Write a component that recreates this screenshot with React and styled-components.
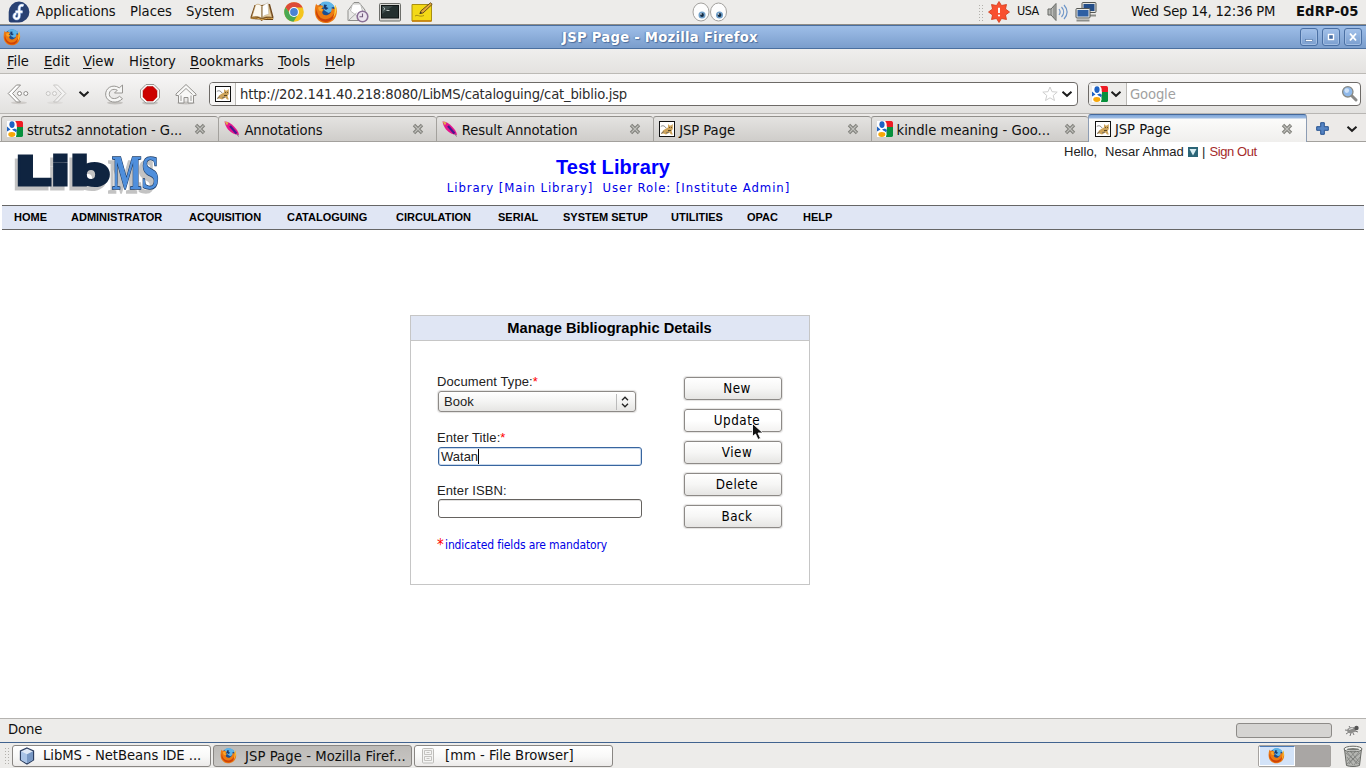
import React from 'react';
import styled, { createGlobalStyle } from 'styled-components';

const Global = createGlobalStyle`
  * { box-sizing: border-box; }
  html, body { margin: 0; padding: 0; }
  body { width: 1366px; height: 768px; overflow: hidden; background: #fff; }
  svg { display: block; flex: none; }
`;

const UI = "'DejaVu Sans Condensed', 'DejaVu Sans', sans-serif";
const ARIAL = "'Liberation Sans', Arial, sans-serif";

const Desktop = styled.div`
  position: relative;
  display: flex;
  flex-direction: column;
  width: 1366px;
  height: 768px;
  overflow: hidden;
  font-family: ${UI};
  font-size: 14.67px;
  color: #101010;
  white-space: pre;
`;

const Slot = styled.div`
  flex: none;
  display: flex;
  align-items: center;
  width: ${p => p.$w}px;
  height: 100%;
`;

const Label = styled.span`
  flex: none;
  display: block;
  font-size: ${p => p.$size || 14.67}px;
  font-weight: ${p => (p.$bold ? 700 : 400)};
  letter-spacing: ${p => p.$ls || 0}px;
  padding-bottom: ${p => p.$pb || 0}px;
  u { text-decoration-thickness: 1px; text-underline-offset: 2px; }
`;

const TopPanel = styled.div`
  flex: none;
  display: flex;
  height: 25px;
  padding-left: 8px;
  background: #edecea;
  border-bottom: 1px solid #8f8d87;
  line-height: 20px;
`;

const Grip = styled.div`
  flex: none;
  width: 6px;
  height: 17px;
  background-image: radial-gradient(circle, #b2b0ab 0.8px, transparent 1px);
  background-size: 3px 3px;
`;

const TitleBar = styled.div`
  flex: none;
  display: flex;
  align-items: center;
  height: 24px;
  padding: 0 4px 0 3px;
  background: linear-gradient(#4a6f9f 0, #4a6f9f 1px, #9dbde6 1px, #96b7e2 6px, #7c9fcd 22px, #7c9fcd 23px, #4a6f9f 23px);
`;

const Title = styled.div`
  flex: 1;
  padding-right: 1px;
  text-align: center;
  color: #fff;
  font-size: 14.67px;
  font-weight: 700;
  line-height: 22px;
  letter-spacing: 0.26px;
  text-shadow: 1px 1px 1px #4c6d9b, -1px 0 1px #6485b4;
`;

const WindowButtons = styled.div`
  display: flex;
  gap: 4px;
`;

const WindowButton = styled.div`
  width: 18px;
  height: 18px;
  border: 1px solid #4a70a4;
  border-radius: 3px;
  background: linear-gradient(#a2c1ea, #7b9fcf);
  box-shadow: inset 0 0 0 1px #a2bee3;
`;

const MenuBar = styled.div`
  flex: none;
  display: flex;
  height: 25px;
  padding-left: 7px;
  background: linear-gradient(#efeeed, #e4e2e0);
  border-bottom: 1px solid #bcbab6;
`;

const Toolbar = styled.div`
  flex: none;
  display: flex;
  align-items: center;
  height: 40px;
  padding: 0 6px 0 7px;
  background: linear-gradient(#f7f6f6, #e2e1df);
  border-bottom: 1px solid #b8b6b3;
`;

const Entry = styled.div`
  flex: none;
  display: flex;
  align-items: center;
  width: ${p => p.$w}px;
  height: 24px;
  margin-left: ${p => p.$ml || 0}px;
  border: 1px solid #6d6a67;
  border-radius: 4px;
  background: #fff;
  overflow: hidden;
`;

const EntryHead = styled.div`
  flex: none;
  display: flex;
  align-items: center;
  gap: 2px;
  height: 22px;
  width: ${p => p.$w}px;
  padding-left: ${p => p.$pad}px;
  background: ${p => p.$bg};
  border-right: 1px solid #bbb9b5;
`;

const EntryText = styled.div`
  flex: 1;
  padding-left: ${p => p.$pl}px;
  color: ${p => p.$color};
  letter-spacing: ${p => p.$ls || 0}px;
`;

const TabStrip = styled.div`
  flex: none;
  display: flex;
  align-items: flex-end;
  height: 28px;
  padding-left: 1px;
  background: #eceae8;
  box-shadow: inset 0 -1px 0 #a3a19d;
`;

const TabBox = styled.div`
  flex: none;
  display: flex;
  align-items: center;
  width: ${p => (p.$active ? 219 : 217.4)}px;
  height: ${p => (p.$active ? 28 : 26)}px;
  padding: 0 ${p => (p.$active ? 13 : 12)}px 0 ${p => (p.$active ? 6 : 5)}px;
  border: 1px solid ${p => (p.$active ? '#8c9cb3' : '#a3a19d')};
  border-right-width: ${p => (p.$active ? 1 : 0)}px;
  border-bottom-width: ${p => (p.$active ? 0 : 1)}px;
  border-top-color: ${p => (p.$active ? '#44689a' : '#92908c')};
  border-radius: 3px 3px 0 0;
  background: ${p =>
    p.$active
      ? 'linear-gradient(#7ea6d9 0, #9dbbe2 3px, #fbfbfa 4px, #f0efed 100%)'
      : 'linear-gradient(#e4e3e1, #cfcdca)'};
`;

const TabLabel = styled.div`
  flex: 1;
  padding-left: 4px;
  letter-spacing: ${p => p.$ls || 0}px;
`;

const TabTools = styled.div`
  display: flex;
  align-items: center;
  gap: 17px;
  height: 27px;
  padding-left: 9px;
`;

const Page = styled.div`
  flex: none;
  display: flex;
  flex-direction: column;
  height: 576px;
  background: #fff;
  font-family: ${ARIAL};
`;

const Header = styled.div`
  flex: none;
  display: grid;
  grid-template-columns: 410px 417px 1fr;
  height: 63px;
`;

const LogoCell = styled.div`
  padding: 1px 0 0 10px;
`;

const LogoText = styled.text`
  paint-order: stroke;
  filter: drop-shadow(${p => p.$shadow} 0 #c3c3c3);
`;

const LibraryInfo = styled.div`
  padding: 13px 0 0;
  text-align: center;
  color: #0000e6;
`;

const LibraryName = styled.div`
  padding-right: 11px;
  font-size: 20px;
  font-weight: 700;
  line-height: 24px;
  letter-spacing: 0.08px;
  color: #0000ff;
`;

const LibraryRole = styled.div`
  font-family: ${UI};
  font-size: 13px;
  line-height: 18px;
  letter-spacing: 0.92px;
`;

const UserLine = styled.div`
  display: flex;
  height: 20px;
  padding-left: 237px;
  font-size: 13px;
  line-height: 20px;
  color: #222;
`;

const SignOut = styled.span`
  padding-left: 4px;
  letter-spacing: -0.4px;
  color: #a52a2a;
`;

const Nav = styled.div`
  flex: none;
  display: flex;
  height: 25px;
  margin: 0 2px;
  padding-left: 12px;
  background: #e0e6f4;
  border: solid #666;
  border-width: 1px 0;
  font-size: 11px;
  font-weight: 700;
  line-height: 23px;
  color: #000;
`;

const NavItem = styled.div`
  flex: none;
  width: ${p => p.$w}px;
`;

const Panel = styled.div`
  flex: none;
  width: 400px;
  height: 270px;
  margin: 85px 0 0 410px;
  border: 1px solid #c6c6c6;
`;

const PanelTitle = styled.div`
  height: 25px;
  padding-right: 1px;
  background: #e0e6f4;
  border-bottom: 1px solid #c6c6c6;
  text-align: center;
  font-size: 14.67px;
  font-weight: 700;
  line-height: 24px;
  color: #000;
`;

const PanelBody = styled.div`
  display: flex;
  justify-content: space-between;
  padding: 33px 27px 0 26px;
`;

const Form = styled.div`
  width: 206px;
  font-size: 13px;
  color: #222;
`;

const FieldLabel = styled.div`
  height: 16px;
  line-height: 16px;
  letter-spacing: 0.1px;
`;

const Star = styled.span`
  color: #ff0000;
`;

const Select = styled.div`
  display: flex;
  align-items: center;
  width: 198px;
  height: 21px;
  margin: 1px 0 18px 1px;
  padding-left: 5px;
  border: 1px solid #8d8a87;
  border-radius: 3px;
  background: linear-gradient(#fff, #f4f4f3 50%, #e6e5e3);
  box-shadow: 0 0 1px 1px #e4e3e2;
`;

const SelectArrows = styled.div`
  display: flex;
  align-items: center;
  width: 19px;
  height: 16px;
  margin-left: auto;
  padding-left: 4px;
  border-left: 1px solid #bbb;
`;

const Input = styled.div`
  display: flex;
  align-items: center;
  width: 204px;
  height: 19px;
  padding-left: 2px;
  border: 1px solid ${p => (p.$focus ? '#38659f' : '#65625f')};
  border-radius: 3px;
  background: #fff;
  box-shadow: ${p => (p.$focus ? 'inset 0 0 0 1px #c9d9ec' : 'inset 0 1px 0 #e2e1e0')};
  margin: ${p => p.$mt || 0}px 0 ${p => p.$mb}px 1px;
`;

const Caret = styled.div`
  width: 1px;
  height: 15px;
  background: #000;
`;

const Note = styled.div`
  display: flex;
  font-family: ${UI};
  font-size: 12px;
  line-height: 16px;
  letter-spacing: -0.12px;
  color: #0000e6;
`;

const NoteStar = styled.span`
  width: 8px;
  font-size: 15px;
  color: #ff0000;
`;

const Actions = styled.div`
  display: flex;
  flex-direction: column;
  gap: 9px;
  padding-top: 3px;
`;

const ActionButton = styled.div`
  width: 98px;
  height: 23px;
  padding-left: 8px;
  border: 1px solid #8d8a87;
  border-radius: 3px;
  background: ${p => (p.$hover ? 'linear-gradient(#fff, #fff 50%, #f3f2f1)' : 'linear-gradient(#fff, #f6f6f5 50%, #e6e5e3)')};
  box-shadow: 0 0 1px 1px #e4e3e2;
  font-family: ${UI};
  font-size: 13.33px;
  letter-spacing: 0.5px;
  line-height: 22px;
  text-align: center;
  color: #000;
`;

const Pointer = styled.div`
  position: absolute;
  left: 751px;
  top: 422px;
`;

const StatusBar = styled.div`
  flex: none;
  display: flex;
  align-items: center;
  height: 24px;
  padding: 0 6px 0 8px;
  background: #edecea;
  border-top: 1px solid #b5b3b0;
`;

const Progress = styled.div`
  width: 96px;
  height: 15px;
  margin: 0 12px 0 auto;
  border: 1px solid #8d8b88;
  border-radius: 3px;
  background: #d5d4d2;
`;

const TaskBar = styled.div`
  flex: none;
  display: flex;
  align-items: center;
  gap: 2px;
  height: 26px;
  padding: 0 3px 0 4px;
  background: #edecea;
  border-top: 1px solid #41638f;
`;

const Task = styled.div`
  display: flex;
  align-items: center;
  width: 199px;
  height: 22px;
  padding: 0 6px;
  border: 1px solid #898683;
  border-radius: 3px;
  background: ${p => (p.$active ? 'linear-gradient(#bcbab7, #c9c7c4)' : 'linear-gradient(#fff, #f9f9f8 50%, #eceae9)')};
`;

const TaskLabel = styled.span`
  padding: 0 0 ${p => (p.$raised ? 2 : 0)}px ${p => p.$pl}px;
  letter-spacing: ${p => p.$ls || 0}px;
`;

const Pager = styled.div`
  display: flex;
  width: 73px;
  height: 22px;
  margin: 0 10px 0 auto;
  border: 1px solid #a5a29f;
  border-radius: 2px;
  background: #a9a6a4;
`;

const Workspace = styled.div`
  display: flex;
  align-items: center;
  justify-content: center;
  width: 36px;
  padding-right: 1px;
  background: #d3e3f8;
  border: 1px solid #fff;
  border-top-color: #4b7ab5;
`;

const Firefox = ({ s }) => (
  <svg width={s} height={s} viewBox="0 0 24 24">
    <circle cx="12" cy="11.5" r="9.5" fill="#1d4f91" />
    <path d="M7 3c5-3 11-1 13.500 3.500l-3 1 1 3.500-4 2-4-2.500-1-3-3-1z" fill="#5db4e8" />
    <path d="M10 4.500l3 .5-1 2 2.500 1-2.500 2-2.500-2z" fill="#173b72" />
    <path d="M2.200 3.500C2.500 5 3.500 5.500 5 5.300c1.600-.4 3.200 0 4.200 1L7.500 8.500 10 9.500 8.500 11.500c-1 2 1.500 4.500 5 3.500 3-1 4.500-4 4.300-7 2 2 3.700 1 3.700-3 2.500 6 1.500 12-2.500 15.500C14 24.500 6 24 2.500 18 .2 14 .4 8 2.200 3.500z" fill="#ec7a12" />
    <path d="M3 8c-.5 4 1 8.500 5 10.500 5 2 10-.5 12.500-6-.2 6-4 9.500-8.500 9.500S2 18 2 12.500z" fill="#cf4308" />
    <path d="M21.500 5c1.500 5 .8 9-2.300 12.500C21 13 21 9 20.500 7z" fill="#ffd23c" />
    <path d="M4 7.500l3-1 2 .5-2 1.800 2 1-1.500 1.700-2.500-1z" fill="#f9a72b" />
  </svg>
);

const Fedora = () => (
  <svg width="22" height="22" viewBox="0 0 22 22">
    <path d="M11 .6A10.400 10.400 0 1 1 11 21.400H3.200A2.300 2.300 0 0 1 .7 19V11A10.400 10.400 0 0 1 11 .6z" fill="#294172" />
    <path d="M15.500 4.600c-2.600-1-4.300.5-4.300 3v7.200c0 2.400-1.800 3.400-3.700 2.700-2.200-1-1.800-4.500.8-4.700M7.500 10.800h7" fill="none" stroke="#8fb0e2" strokeWidth="3.200" />
    <path d="M15.500 4.600c-2.600-1-4.300.5-4.300 3v7.200c0 2.400-1.800 3.400-3.700 2.700-2.200-1-1.800-4.500.8-4.700M7.500 10.800h7" fill="none" stroke="#fff" strokeWidth="1.900" />
  </svg>
);

const Book = () => (
  <svg width="24" height="20" viewBox="0 0 24 20">
    <path d="M.5 15L4.500 3l7 0 8.500-1 3.500 13-.5 3-10 0-1.500 1-1.500-1.500L.8 17z" fill="#6d4316" />
    <path d="M1.800 15L5.500 3C8 1.500 10.300 2.500 12 4.500v11.700c-3-1.800-6.500-2.200-10.200-1.200z" fill="#fbf7ee" stroke="#b28a4c" strokeWidth=".6" />
    <path d="M12 16.200V4.500c2-2 4-2.500 6.500-2l3.500 12.700c-4-.8-7-.6-10 1z" fill="#e9cf9f" stroke="#a98a5d" strokeWidth=".5" />
    <path d="M12 15.500V4.800C14 3 16 1.500 18 .8l.8 11.500c-3 .4-5 1.400-6.800 3.200z" fill="#fff" stroke="#b3a68e" strokeWidth=".5" />
    <path d="M12 4.500v11.700" stroke="#8d7348" />
    <path d="M1 16.300c4-.8 7.500-.3 11 1.500 3.500-1.600 7-1.900 11-1.200" fill="none" stroke="#d9a850" />
  </svg>
);

const Chrome = () => (
  <svg width="22" height="22" viewBox="0 0 22 22">
    <circle cx="11" cy="11" r="9.800" fill="#f4c51d" />
    <path d="M2.400 6.300A9.800 9.800 0 0 1 19.700 6.500H11L7 12z" fill="#dd4b39" />
    <path d="M2.400 6.300A9.800 9.800 0 0 0 10.500 20.800L14.500 14 9 15z" fill="#4aa853" />
    <circle cx="11" cy="11" r="4.900" fill="#fff" />
    <circle cx="11" cy="11" r="3.900" fill="#4a83d4" />
  </svg>
);

const Mail = () => (
  <svg width="22" height="22" viewBox="0 0 22 22">
    <path d="M1 9.500L7 1.500h5L18 9v10.500H1z" fill="#e9e9e7" stroke="#8e8e8b" />
    <path d="M3.500 10L5.500 3h8l2 7-6 4.500z" fill="#fff" stroke="#b5b5b2" strokeWidth=".8" />
    <path d="M1.500 19.500L9.500 12" stroke="#aaa" />
    <circle cx="15.500" cy="15.500" r="5.300" fill="#ece5ef" stroke="#8a7096" strokeWidth="1.600" />
    <path d="M15.500 12.500v3.200h-3" fill="none" stroke="#705a7a" strokeWidth="1.100" />
  </svg>
);

const Terminal = () => (
  <svg width="22" height="19" viewBox="0 0 22 19">
    <rect x=".5" y=".5" width="21" height="17.500" rx="1" fill="#d8d8d4" stroke="#6d6e6a" />
    <rect x="2.500" y="2.500" width="17" height="12.500" fill="#24302f" stroke="#101514" />
    <path d="M3 11L14 3H3z" fill="#3e4c4b" />
    <path d="M4.500 4.500L6 5.700 4.500 7M7.500 7.500h3" stroke="#cfd8d5" fill="none" strokeWidth=".9" />
  </svg>
);

const NotePad = () => (
  <svg width="22" height="21" viewBox="0 0 22 21">
    <path d="M1 2.500h19.500V19H1z" fill="#f3d916" stroke="#a98f10" />
    <path d="M1 19h19.500" stroke="#c9820e" strokeWidth="1.600" />
    <path d="M9 11.500l1-2.700L19.500.8l1.700 1.500L12 11z" fill="#e3a83a" stroke="#5e4616" strokeWidth=".9" />
    <path d="M8.500 12l1-2.500 1.500 1.500z" fill="#3d3422" />
    <path d="M4 14c3-2 4 1.500 9-.5" stroke="#a98f10" fill="none" />
  </svg>
);

const Eyes = () => (
  <svg width="36" height="20" viewBox="0 0 36 20">
    {[0, 17.500].map(x => (
      <g key={x}>
        <ellipse cx={x + 9} cy="10" rx="8" ry="9" fill="#fdfdfd" stroke="#a3a19e" />
        <circle cx={x + 10} cy="13" r="3.500" fill="#6f9fc9" />
        <circle cx={x + 10} cy="13" r="1.900" fill="#152a40" />
        <circle cx={x + 9} cy="12" r=".8" fill="#fff" />
      </g>
    ))}
  </svg>
);

const Alert = () => (
  <svg width="22" height="22" viewBox="0 0 22 22">
    <path d="M11 .5l2.500 4L18.500 3.500l-1 4.500 4 3-4 3 1 4.500-5-1L11 21.500l-2.500-4-5 1 1-4.500-4-3 4-3-1-4.500 5 1z" fill="#f9502f" stroke="#d23a17" strokeWidth=".8" />
    <path d="M11 6.800v5.200" stroke="#fff" strokeWidth="1.900" />
    <circle cx="11" cy="14.500" r="1.100" fill="#fff" />
  </svg>
);

const Volume = () => (
  <svg width="22" height="20" viewBox="0 0 22 20">
    <path d="M1 7h3l5-5.500v17L4 13H1z" fill="#b9bab7" stroke="#666864" />
    <path d="M4 7v6M7 4v12" stroke="#777975" />
    <path d="M12 7c1.500 2 1.500 4 0 6M14.500 5c2.800 3 2.800 7 0 10M17 3c4 4.500 4 9.500 0 14" fill="none" stroke="#6d95c8" strokeWidth="1.200" />
  </svg>
);

const Network = () => (
  <svg width="22" height="20" viewBox="0 0 22 20">
    <rect x="7" y=".5" width="14" height="10" rx="1" fill="#e2e3e0" stroke="#555753" />
    <rect x="8.500" y="2" width="11" height="7" fill="#234d88" />
    <path d="M14 13.500h7" stroke="#8c8e8a" strokeWidth="2" />
    <rect x="1" y="6.500" width="14" height="9.500" rx="1" fill="#e8e9e6" stroke="#555753" />
    <rect x="2.500" y="8" width="11" height="6.500" fill="#2e5fa3" />
    <path d="M1.500 18.500h13" stroke="#8c8e8a" strokeWidth="2" />
  </svg>
);

const Back = ({ flip, dim }) => (
  <svg width="22" height="22" viewBox="0 0 22 22" opacity={dim ? 0.4 : 1} transform={flip ? 'scale(-1 1)' : undefined}>
    <ellipse cx="12" cy="19.800" rx="8" ry="1.500" fill="#cfccc9" />
    <path d="M1.200 10.500L9.500 2h4L5.500 10.500l8 8.500h-4z" fill="#fff" stroke="#8e8c89" />
    <circle cx="12.500" cy="10.500" r="2" fill="#fff" stroke="#8e8c89" />
    <circle cx="18.800" cy="10.500" r="2" fill="#fff" stroke="#8e8c89" />
  </svg>
);

const Chevron = () => (
  <svg width="12" height="8" viewBox="0 0 12 8">
    <path d="M1.500 1.800L6 5.800l4.500-4" fill="none" stroke="#1d1d1d" strokeWidth="2" />
  </svg>
);

const Reload = () => (
  <svg width="22" height="22" viewBox="0 0 22 22">
    <ellipse cx="11" cy="19.800" rx="8" ry="1.600" fill="#c4c2bf" />
    <path d="M18.500 2v8h-8l2.800-2.800C9 5 5 7.500 5.300 11.500 5.800 16 11.500 17 15.500 13.300l3 2.400C13 21.500 3 19.500 1.700 12.500 .8 5 8.500.500 15.300 4.800z" fill="#f6f6f5" stroke="#989693" />
  </svg>
);

const Stop = () => (
  <svg width="22" height="22" viewBox="0 0 22 22">
    <ellipse cx="11" cy="20" rx="8" ry="1.600" fill="#c4c2bf" />
    <path d="M7 1.500h8L20.500 7v8L15 20H7L1.500 15V7z" fill="#f8f8f7" stroke="#999794" />
    <path d="M8 3.500h6L18 7.500v6.500L14 18H8l-4-4V7.500z" fill="#cc0000" stroke="#a00" strokeWidth=".5" />
  </svg>
);

const Home = () => (
  <svg width="22" height="22" viewBox="0 0 22 22">
    <ellipse cx="11" cy="20" rx="9" ry="1.500" fill="#c4c2bf" />
    <path d="M1 11L11 1.500 21 11v1.500h-2.500V20H13v-5.500H9V20H3.500v-7.500H1z" fill="#f8f8f7" stroke="#93918e" />
    <path d="M4.500 11.500l6.500-6 6.500 6M6 18v-5.500M16 18v-5.500" fill="none" stroke="#9d9b98" />
  </svg>
);

const Tomcat = () => (
  <svg width="16" height="16" viewBox="0 0 16 16">
    <rect x=".5" y=".5" width="15" height="15" fill="#fff" stroke="#111" />
    <path d="M2 13l2-3.500 3-2 2-1V3l1.500 1.500h1.500L13.800 3v5l-1.300 2L13.800 13.500H12l-1.500-2L7 13.500l-2.500-1z" fill="#cda35a" />
    <path d="M1.800 5.500C3.500 4.300 5.500 4.500 7 7M2 12.500l3-2M7 12l3-1" stroke="#666" strokeWidth=".8" fill="none" />
    <path d="M10 6.500h.8M12.200 6.500h.8M9 9.500h3" stroke="#5b4823" />
  </svg>
);

const GoogleIcon = () => (
  <svg width="16" height="16" viewBox="0 0 16 16">
    <rect width="16" height="16" fill="#fff" />
    <path d="M7 0h7.500A1.500 1.500 0 0 1 16 1.500V6h-6z" fill="#ed1c24" />
    <path d="M10 6h6v8.500a1.500 1.500 0 0 1-1.500 1.500H9z" fill="#07903c" />
    <ellipse cx="5.500" cy="3.800" rx="4.200" ry="4.600" fill="#fff" />
    <ellipse cx="5" cy="3.600" rx="2.600" ry="3.400" fill="#1d62c4" />
    <path d="M0 5.500l3.500 3L0 10.500zM5 8.500l3-1 2 1.500-1 2.500z" fill="#1d62c4" />
    <ellipse cx="5" cy="13.300" rx="4.400" ry="3.200" fill="#fff" />
    <ellipse cx="4.800" cy="13.500" rx="3.500" ry="2.400" fill="#f7a70a" />
  </svg>
);

const Feather = () => (
  <svg width="16" height="16" viewBox="0 0 16 16">
    <path d="M.5.500C4 .5 7 2.500 9.500 5c3 3 5 5.500 5.500 9C11 14 7 11.500 4 8.500 2 6 1.200 3.500.5.500z" fill="#e5158c" />
    <path d="M.5.500L4.500 1.500 3 4.500z" fill="#e0b04c" />
    <path d="M6 5l6.500 7.500" stroke="#4a1690" strokeWidth="2.200" />
    <path d="M13 13l1.500 2.500" stroke="#777" />
  </svg>
);

const CloseX = () => (
  <svg width="12" height="12" viewBox="0 0 12 12">
    <path d="M2 2l8 8M10 2l-8 8" stroke="#7f7f7a" strokeWidth="3.400" />
    <path d="M2.500 2.500l7 7M9.500 2.500l-7 7" stroke="#c0c0bc" strokeWidth="1.200" />
  </svg>
);

const StarIcon = () => (
  <svg width="16" height="16" viewBox="0 0 16 16">
    <path d="M8 1l2 4.700 5.200.4-4 3.400 1.300 5L8 11.800l-4.500 2.700 1.300-5-4-3.400L6 5.700z" fill="#fff" stroke="#cfcfcf" />
  </svg>
);

const Search = () => (
  <svg width="17" height="17" viewBox="0 0 17 17">
    <path d="M10.500 10.500l4.500 4.500" stroke="#8a8a88" strokeWidth="3" strokeLinecap="round" />
    <circle cx="6.800" cy="6.800" r="5.200" fill="#8fb9ea" stroke="#888a85" strokeWidth="1.300" />
    <circle cx="5.800" cy="5.600" r="2.300" fill="#cfe2f8" />
  </svg>
);

const Plus = () => (
  <svg width="13" height="13" viewBox="0 0 13 13">
    <path d="M4.700.700h3.600v4h4v3.600h-4v4H4.700v-4h-4V4.700h4z" fill="#5584c3" stroke="#24508f" />
  </svg>
);

const Logo = () => (
  <svg width="160" height="62" viewBox="0 0 160 62">
    <LogoText $shadow="-3px 4px" x="5" y="42" textLength="95" lengthAdjust="spacingAndGlyphs" fontFamily="DejaVu Sans" fontWeight="700" fontSize="38.500" fill="#0f2440" stroke="#0f2440" strokeWidth="3.200">Lib</LogoText>
    <LogoText $shadow="-4px 4px" x="102" y="46" textLength="47" lengthAdjust="spacingAndGlyphs" fontFamily="Liberation Serif" fontWeight="700" fontSize="49" fill="#4f8fdc" stroke="#1b3b66" strokeWidth="1.600">MS</LogoText>
  </svg>
);

const UserMenuIcon = () => (
  <svg width="10" height="10" viewBox="0 0 10 10">
    <rect width="10" height="10" fill="#2b6577" />
    <path d="M1.500 2h7L5 8.500z" fill="#d9edf2" />
  </svg>
);

const UpDown = () => (
  <svg width="8" height="12" viewBox="0 0 8 12">
    <path d="M1 4.200L4 1.200 7 4.200M1 7.800L4 10.800 7 7.800" fill="none" stroke="#222" strokeWidth="1.300" />
  </svg>
);

const ArrowPointer = () => (
  <svg width="14" height="20" viewBox="0 0 14 20">
    <path d="M1.500 1.500v13l3-2.500 2.500 5.500 2.500-1.200L7 11h5z" fill="#111" stroke="#fff" strokeWidth=".9" />
  </svg>
);

const Cube = () => (
  <svg width="16" height="18" viewBox="0 0 16 18">
    <path d="M8 1l6.500 3v9L8 17l-6.500-4V4z" fill="#dfe9f7" stroke="#2c3e60" strokeWidth="1.300" />
    <path d="M2 4.300l6 2.900v9L2 13z" fill="#a9c3e6" />
    <path d="M8 7.200l6-2.900V13l-6 3.200z" fill="#7898c4" />
  </svg>
);

const Cabinet = () => (
  <svg width="14" height="16" viewBox="0 0 14 16">
    <rect x="1.500" y=".5" width="11" height="14.500" rx="1" fill="#f4f4f3" stroke="#bdbcb9" />
    <path d="M3.500 2.500h7v4h-7zM3.500 8.500h7v4h-7zM5.500 4.500h3M5.500 10.500h3" fill="none" stroke="#c4c3c0" />
  </svg>
);

const Bug = () => (
  <svg width="16" height="13" viewBox="0 0 16 13">
    <path d="M1 6l4 .5M2 10l3-2M6 12l1-3M10 11l-1-2M5 2l2 3M14 8l-3-1" stroke="#777" fill="none" />
    <ellipse cx="7.500" cy="6" rx="4.500" ry="2.900" fill="#8d8d8b" transform="rotate(-15 8 6)" />
    <circle cx="12.500" cy="4" r="2.200" fill="#555" />
    <path d="M5 5.500l4-1.500" stroke="#ddd" strokeWidth="1.300" />
  </svg>
);

const Trash = () => (
  <svg width="20" height="22" viewBox="0 0 20 22">
    <path d="M1.500 4L3.500 20.500c3 1.300 10 1.300 13 0L18.500 4z" fill="#b5b6b2" stroke="#666864" />
    <path d="M4 7l10 12M8 7l8 10M4 12l6 8M16 7L6 19M12 7l-8 9M17 12l-6 8M3 8l13 11M17 8L4 19" stroke="#6f716d" strokeWidth=".6" />
    <ellipse cx="10" cy="4" rx="9" ry="2.800" fill="#f4f5f2" stroke="#666864" />
    <ellipse cx="10" cy="4.300" rx="6.500" ry="1.200" fill="#777975" />
  </svg>
);

const TABS = [
  ['struts2 annotation - G...', GoogleIcon, -0.1],
  ['Annotations', Feather, -0.1],
  ['Result Annotation', Feather, -0.08],
  ['JSP Page', Tomcat, -0.05],
  ['kindle meaning - Goo...', GoogleIcon, 0],
  ['JSP Page', Tomcat, -0.05],
];

const MENUS = [['F', 'ile', 37], ['E', 'dit', 39], ['V', 'iew', 46], ['', 'History', 61], ['B', 'ookmarks', 88], ['T', 'ools', 47], ['H', 'elp', 50]];

const NAV = [['HOME', 57], ['ADMINISTRATOR', 118], ['ACQUISITION', 98], ['CATALOGUING', 109], ['CIRCULATION', 102], ['SERIAL', 65], ['SYSTEM SETUP', 108], ['UTILITIES', 76], ['OPAC', 56], ['HELP', 60]];

export default function App() {
  return (
    <Desktop>
      <Global />
      <TopPanel>
        <Slot $w={28}><Fedora /></Slot>
        <Slot $w={94}><Label $pb={3} $ls={-0.08}>Applications</Label></Slot>
        <Slot $w={56}><Label $pb={3}>Places</Label></Slot>
        <Slot $w={64}><Label $pb={3} $ls={-0.1}>System</Label></Slot>
        <Slot $w={33}><Book /></Slot>
        <Slot $w={31}><Chrome /></Slot>
        <Slot $w={33}><Firefox s={24} /></Slot>
        <Slot $w={32}><Mail /></Slot>
        <Slot $w={32}><Terminal /></Slot>
        <Slot $w={281}><NotePad /></Slot>
        <Slot $w={286}><Eyes /></Slot>
        <Slot $w={10}><Grip /></Slot>
        <Slot $w={29}><Alert /></Slot>
        <Slot $w={30}><Label $pb={2} $size={12.5} $ls={-0.6}>USA</Label></Slot>
        <Slot $w={28}><Volume /></Slot>
        <Slot $w={56}><Network /></Slot>
        <Slot $w={165}><Label $pb={3} $ls={-0.22}>Wed Sep 14, 12:36 PM</Label></Slot>
        <Slot $w={66}><Label $pb={3} $bold $ls={0.1}>EdRP-05</Label></Slot>
      </TopPanel>
      <TitleBar>
        <Firefox s={18} />
        <Title>JSP Page - Mozilla Firefox</Title>
        <WindowButtons>
          <WindowButton><svg width="16" height="16" viewBox="0 0 16 16"><rect x="4.500" y="10.500" width="7" height="2" fill="#fff" stroke="#4a70a4" strokeWidth=".6" /></svg></WindowButton>
          <WindowButton><svg width="16" height="16" viewBox="0 0 16 16"><rect x="5.500" y="5.500" width="5" height="5" fill="#4a70a4" stroke="#fff" strokeWidth="1.400" /></svg></WindowButton>
          <WindowButton><svg width="16" height="16" viewBox="0 0 16 16"><path d="M5 4.500l6 7M11 4.500l-6 7" stroke="#fff" strokeWidth="1.900" /></svg></WindowButton>
        </WindowButtons>
      </TitleBar>
      <MenuBar>
        {MENUS.map(([k, rest, w]) => (
          <Slot key={rest} $w={w}>
            <Label $pb={2}>{k ? <><u>{k}</u>{rest}</> : <>Hi<u>s</u>tory</>}</Label>
          </Slot>
        ))}
      </MenuBar>
      <Toolbar>
        <Slot $w={38}><Back /></Slot>
        <Slot $w={33}><Back flip dim /></Slot>
        <Slot $w={26}><Chevron /></Slot>
        <Slot $w={35}><Reload /></Slot>
        <Slot $w={36}><Stop /></Slot>
        <Slot $w={34}><Home /></Slot>
        <Entry $w={869}>
          <EntryHead $w={26} $pad={5} $bg="#f6f5f4"><Tomcat /></EntryHead>
          <EntryText $pl={4} $color="#2c2c2c" $ls={-0.2}>http://202.141.40.218:8080/LibMS/cataloguing/cat_biblio.jsp</EntryText>
          <Slot $w={19}><StarIcon /></Slot>
          <Slot $w={16}><Chevron /></Slot>
        </Entry>
        <Entry $w={273} $ml={10}>
          <EntryHead $w={38} $pad={3} $bg="#edecea"><GoogleIcon /><Chevron /></EntryHead>
          <EntryText $pl={3} $color="#a0a0a0" $ls={-0.15}>Google</EntryText>
          <Slot $w={19}><Search /></Slot>
        </Entry>
      </Toolbar>
      <TabStrip>
        {TABS.map(([name, Icon, ls], i) => (
          <TabBox key={i} $active={i === 5}>
            <Icon />
            <TabLabel $ls={ls}>{name}</TabLabel>
            <CloseX />
          </TabBox>
        ))}
        <TabTools><Plus /><Chevron /></TabTools>
      </TabStrip>
      <Page>
        <Header>
          <LogoCell><Logo /></LogoCell>
          <LibraryInfo>
            <LibraryName>Test Library</LibraryName>
            <LibraryRole>{'Library [Main Library]  User Role: [Institute Admin]'}</LibraryRole>
          </LibraryInfo>
          <UserLine>
            <Slot $w={41}>Hello,</Slot>
            <Slot $w={83}>Nesar Ahmad</Slot>
            <Slot $w={14}><UserMenuIcon /></Slot>
            <span>|</span>
            <SignOut>Sign Out</SignOut>
          </UserLine>
        </Header>
        <Nav>
          {NAV.map(([t, w]) => <NavItem key={t} $w={w}>{t}</NavItem>)}
        </Nav>
        <Panel>
          <PanelTitle>Manage Bibliographic Details</PanelTitle>
          <PanelBody>
            <Form>
              <FieldLabel>Document Type:<Star>*</Star></FieldLabel>
              <Select>Book<SelectArrows><UpDown /></SelectArrows></Select>
              <FieldLabel>Enter Title:<Star>*</Star></FieldLabel>
              <Input $focus $mt={1} $mb={17}>Watan<Caret /></Input>
              <FieldLabel>Enter ISBN:</FieldLabel>
              <Input $mb={19} />
              <Note><NoteStar>*</NoteStar>indicated fields are mandatory</Note>
            </Form>
            <Actions>
              {['New', 'Update', 'View', 'Delete', 'Back'].map(t => (
                <ActionButton key={t} $hover={t === 'Update'}>{t}</ActionButton>
              ))}
            </Actions>
          </PanelBody>
        </Panel>
      </Page>
      <StatusBar>
        <Label $pb={4} $ls={-0.1}>Done</Label>
        <Progress />
        <Bug />
      </StatusBar>
      <TaskBar>
        <Grip />
        <Task><Cube /><TaskLabel $pl={8} $ls={-0.04} $raised>LibMS - NetBeans IDE ...</TaskLabel></Task>
        <Task $active><Firefox s={17} /><TaskLabel $pl={8} $ls={0.08}>JSP Page - Mozilla Firef...</TaskLabel></Task>
        <Task><Cabinet /><TaskLabel $pl={10} $raised>[mm - File Browser]</TaskLabel></Task>
        <Pager><Workspace><Firefox s={17} /></Workspace></Pager>
        <Trash />
      </TaskBar>
      <Pointer><ArrowPointer /></Pointer>
    </Desktop>
  );
}
